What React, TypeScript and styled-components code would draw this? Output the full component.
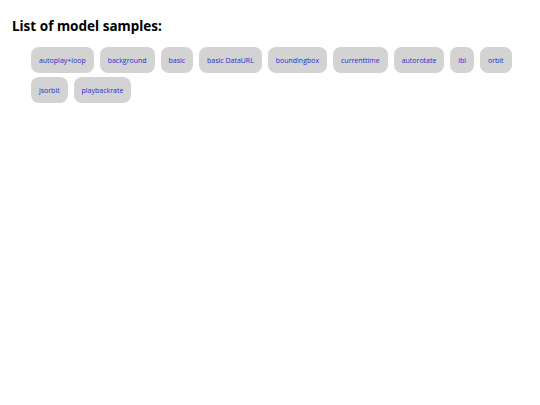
import { FC } from "react"
import styled, { createGlobalStyle } from "styled-components"

const GlobalStyle = createGlobalStyle`
  body {
    margin: 0;
    background: #ffffff;
    font-family: "Noto Sans", "Open Sans", sans-serif;
  }
`

const Page = styled.div`
  padding: 16px 12px;
`

const Heading = styled.h1`
  margin: 0 0 11px;
  font-size: 13.5px;
  font-weight: 700;
  line-height: 20px;
  color: #000;
`

const SampleList = styled.ul`
  display: flex;
  flex-wrap: wrap;
  gap: 4px 6px;
  list-style: none;
  margin: 0;
  padding: 0 0 0 19px;
  max-width: 500px;
`

const SampleLink = styled.a`
  display: flex;
  align-items: center;
  height: 26px;
  padding: 0 7.95px;
  border-radius: 8px;
  background: #d3d3d3;
  color: #2b2bcf;
  font-family: "Open Sans", "Noto Sans", sans-serif;
  font-size: 7px;
  text-decoration: none;
  white-space: nowrap;
`

const samples = [
  "autoplay+loop",
  "background",
  "basic",
  "basic DataURL",
  "boundingbox",
  "currenttime",
  "autorotate",
  "ibl",
  "orbit",
  "jsorbit",
  "playbackrate",
]

const App: FC = () => (
  <Page>
    <GlobalStyle />
    <Heading>List of model samples:</Heading>
    <SampleList>
      {samples.map((name) => (
        <li key={name}>
          <SampleLink href={`#${name}`}>{name}</SampleLink>
        </li>
      ))}
    </SampleList>
  </Page>
)

export default App
